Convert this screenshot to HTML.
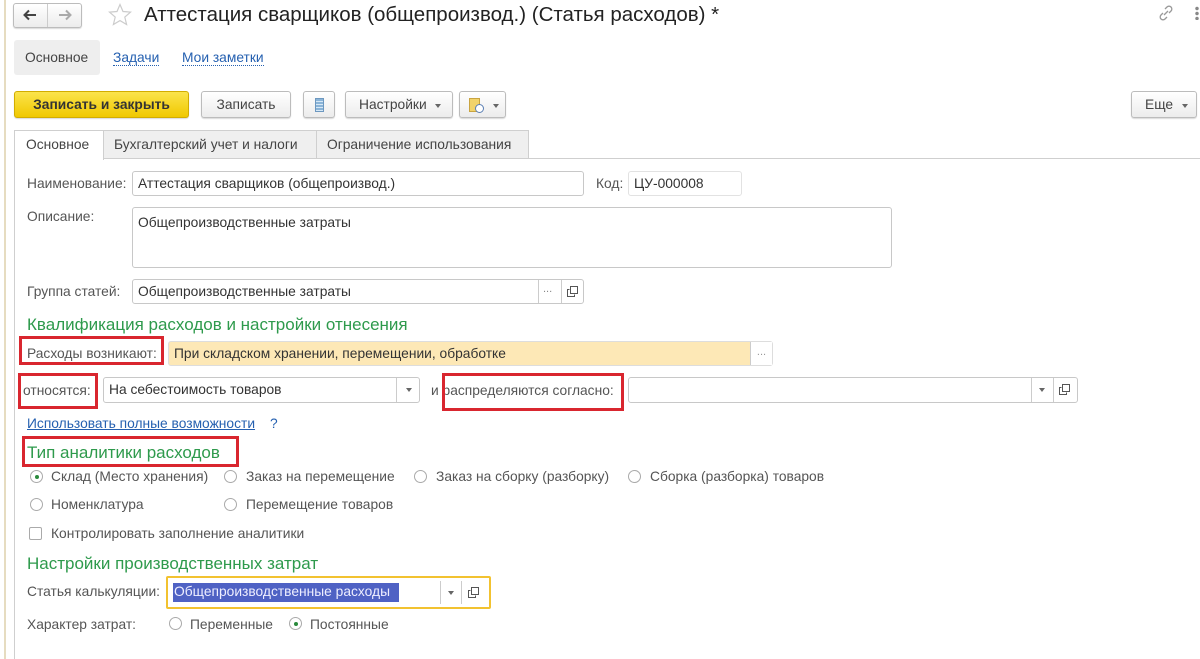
<!DOCTYPE html>
<html><head><meta charset="utf-8"><style>
*{box-sizing:border-box;margin:0;padding:0}
body{width:1200px;height:659px;background:#fff;font-family:"Liberation Sans","Noto Sans CJK SC",sans-serif;font-size:13.8px;color:#333;position:relative;overflow:hidden}
.a{position:absolute;white-space:nowrap}
.btn{position:absolute;border:1px solid #bcbcbc;border-radius:3px;background:linear-gradient(#fff,#ececec);box-shadow:0 1px 1px rgba(0,0,0,.15);text-align:center;color:#444}
.inp{position:absolute;border:1px solid #c8c8c8;border-radius:3px;background:#fff;padding-left:5px;color:#333}
.lbl{position:absolute;color:#555;white-space:nowrap}
.h{position:absolute;color:#2e9a4c;font-size:17px;white-space:nowrap}
.red{position:absolute;border:3px solid #d9262f}
.rad{position:absolute;width:13px;height:13px;border:1px solid #aaa;border-radius:50%;background:#fff}
.rad.on::after{content:"";position:absolute;left:3.5px;top:3.5px;width:4px;height:4px;border-radius:50%;background:#2a8a3c}
.sep{position:absolute;top:0;bottom:0;border-left:1px solid #ccc}
.dd{position:absolute;width:0;height:0;border-left:3px solid transparent;border-right:3px solid transparent;border-top:4px solid #666}
.ic{position:absolute;width:11px;height:11px}
</style></head><body>
<svg width="0" height="0" style="position:absolute"><defs><g id="cp"><rect x="3.5" y="0.5" width="7" height="7" fill="#fff" stroke="#555"/><path d="M2.5 3.5H0.5V10.5H7.5V8.5" fill="none" stroke="#555"/></g></defs></svg>
<div class="a" style="left:4px;top:0;width:2px;height:659px;background:#e6dcc0"></div>
<!-- nav -->
<div class="btn" style="left:13px;top:3px;width:69px;height:25px"></div>
<div class="a" style="left:47px;top:4px;width:1px;height:23px;background:#ccc"></div>
<svg class="a" style="left:23px;top:9px" width="14" height="12" viewBox="0 0 14 12"><path d="M13 6H2M6 1.5L1.5 6 6 10.5" fill="none" stroke="#444" stroke-width="2"/></svg>
<svg class="a" style="left:58px;top:9px" width="14" height="12" viewBox="0 0 14 12"><path d="M1 6H12M8 1.5L12.5 6 8 10.5" fill="none" stroke="#aaa" stroke-width="2"/></svg>
<svg class="a" style="left:108px;top:3px" width="24" height="23" viewBox="0 0 24 23"><path d="M12 1.5l3 7 7.5.6-5.7 5 1.8 7.4L12 17.6 5.4 21.5l1.8-7.4-5.7-5 7.5-.6z" fill="none" stroke="#ccc" stroke-width="1.2"/></svg>
<div class="a" style="left:144px;top:3px;font-size:20.5px;color:#222">Аттестация сварщиков (общепроизвод.) (Статья расходов) *</div>
<svg class="a" style="left:1158px;top:5px" width="16" height="16" viewBox="0 0 16 16"><g fill="none" stroke="#999" stroke-width="1.3"><path d="M7 4l2-2a2.5 2.5 0 0 1 4 4l-2 2"/><path d="M9 12l-2 2a2.5 2.5 0 0 1-4-4l2-2"/><path d="M6 10l4-4"/></g></svg>
<div class="a" style="left:1195px;top:6px;width:4px;height:14px;background:radial-gradient(circle,#888 1.5px,transparent 2px) 0 0/4px 5px"></div>
<!-- section tabs -->
<div class="a" style="left:14px;top:40px;width:86px;height:35px;background:#eeeeee;border-radius:3px"></div>
<div class="a" style="left:25px;top:50px;color:#444">Основное</div>
<div class="a" style="left:113px;top:50px;color:#2560b0;border-bottom:1px dotted #2560b0;line-height:15px">Задачи</div>
<div class="a" style="left:182px;top:50px;color:#2560b0;border-bottom:1px dotted #2560b0;line-height:15px">Мои заметки</div>
<!-- toolbar -->
<div class="btn" style="left:14px;top:91px;width:175px;height:27px;background:linear-gradient(#fbe44c,#f0c800);border-color:#d2ad00;line-height:25px;color:#333;font-weight:bold">Записать и закрыть</div>
<div class="btn" style="left:201px;top:91px;width:90px;height:27px;line-height:25px">Записать</div>
<div class="btn" style="left:303px;top:91px;width:32px;height:27px"><div class="a" style="left:11px;top:6px;width:9px;height:14px;background:repeating-linear-gradient(#8ab4d8 0 2px,#d6e8f6 2px 3px);border:1px solid #6d98c0"></div></div>
<div class="btn" style="left:345px;top:91px;width:108px;height:27px;line-height:25px;text-align:left;padding-left:13px">Настройки<div class="dd" style="left:89px;top:12px"></div></div>
<div class="btn" style="left:459px;top:91px;width:47px;height:27px"><div class="a" style="left:9px;top:6px;width:11px;height:14px;background:#f2d36a;border:1px solid #c9a440"></div><div class="a" style="left:15px;top:12px;width:9px;height:9px;border-radius:50%;background:#fff;border:1.5px solid #5b7fb4"></div><div class="dd" style="left:33px;top:12px"></div></div>
<div class="btn" style="left:1131px;top:91px;width:66px;height:27px;line-height:25px;text-align:left;padding-left:13px">Еще<div class="dd" style="left:50px;top:12px"></div></div>
<!-- tabs -->
<div class="a" style="left:14px;top:158px;width:1186px;height:1px;background:#cfcfcf"></div>
<div class="a" style="left:14px;top:158px;width:1px;height:501px;background:#cfcfcf"></div>
<div class="a" style="left:103px;top:130px;width:214px;height:29px;background:#efefef;border:1px solid #cfcfcf"></div>
<div class="a" style="left:316px;top:130px;width:213px;height:29px;background:#efefef;border:1px solid #cfcfcf"></div>
<div class="a" style="left:14px;top:130px;width:90px;height:30px;background:#fff;border:1px solid #cfcfcf;border-bottom:none"></div>
<div class="a" style="left:26px;top:137px;color:#444">Основное</div>
<div class="a" style="left:114px;top:137px;color:#444">Бухгалтерский учет и налоги</div>
<div class="a" style="left:327px;top:137px;color:#444">Ограничение использования</div>
<!-- fields -->
<div class="lbl" style="left:27px;top:176px">Наименование:</div>
<div class="inp" style="left:132px;top:171px;width:452px;height:25px;line-height:23px">Аттестация сварщиков (общепроизвод.)</div>
<div class="lbl" style="left:596px;top:176px">Код:</div>
<div class="inp" style="left:628px;top:171px;width:114px;height:25px;line-height:23px;border-color:#e2e2e2">ЦУ-000008</div>
<div class="lbl" style="left:27px;top:209px">Описание:</div>
<div class="inp" style="left:132px;top:207px;width:760px;height:61px;padding-top:7px">Общепроизводственные затраты</div>
<div class="lbl" style="left:27px;top:284px">Группа статей:</div>
<div class="inp" style="left:132px;top:279px;width:452px;height:25px;line-height:23px">Общепроизводственные затраты<div class="sep" style="left:405px"></div><div class="sep" style="left:428px"></div><div class="a" style="left:410px;top:-2px;color:#888;font-size:11px">...</div><svg class="ic" style="left:434px;top:6px"><use href="#cp"/></svg></div>
<div class="h" style="left:27px;top:315px">Квалификация расходов и настройки отнесения</div>
<div class="lbl" style="left:27px;top:346px">Расходы возникают:</div>
<div class="inp" style="left:168px;top:341px;width:605px;height:25px;line-height:23px;background:#fde8b6;border-color:#ddd">При складском хранении, перемещении, обработке<div class="a" style="left:581px;top:0;width:22px;height:23px;background:#fff;border-left:1px solid #ccc;color:#999;font-size:11px;text-align:center;line-height:20px">...</div></div>
<div class="red" style="left:19px;top:336px;width:145px;height:29px"></div>
<div class="lbl" style="left:23px;top:383px">относятся:</div>
<div class="inp" style="left:103px;top:377px;width:317px;height:26px;line-height:24px">На себестоимость товаров<div class="sep" style="left:292px"></div><div class="dd" style="left:302px;top:10px"></div></div>
<div class="red" style="left:18px;top:373px;width:80px;height:36px"></div>
<div class="lbl" style="left:431px;top:383px">и распределяются согласно:</div>
<div class="red" style="left:442px;top:373px;width:182px;height:38px"></div>
<div class="inp" style="left:628px;top:377px;width:450px;height:26px"><div class="sep" style="left:402px"></div><div class="sep" style="left:424px"></div><div class="dd" style="left:410px;top:10px"></div><svg class="ic" style="left:430px;top:6px"><use href="#cp"/></svg></div>
<div class="a" style="left:27px;top:416px;color:#2560b0;text-decoration:underline">Использовать полные возможности</div>
<div class="a" style="left:270px;top:416px;color:#2560b0">?</div>
<div class="h" style="left:27px;top:443px">Тип аналитики расходов</div>
<div class="red" style="left:22px;top:436px;width:217px;height:31px"></div>
<div class="rad on" style="left:30px;top:470px"></div><div class="lbl" style="left:51px;top:469px">Склад (Место хранения)</div>
<div class="rad" style="left:224px;top:470px"></div><div class="lbl" style="left:246px;top:469px">Заказ на перемещение</div>
<div class="rad" style="left:414px;top:470px"></div><div class="lbl" style="left:436px;top:469px">Заказ на сборку (разборку)</div>
<div class="rad" style="left:628px;top:470px"></div><div class="lbl" style="left:650px;top:469px">Сборка (разборка) товаров</div>
<div class="rad" style="left:30px;top:498px"></div><div class="lbl" style="left:51px;top:497px">Номенклатура</div>
<div class="rad" style="left:224px;top:498px"></div><div class="lbl" style="left:246px;top:497px">Перемещение товаров</div>
<div class="a" style="left:29px;top:527px;width:13px;height:13px;border:1px solid #aaa;border-radius:2px"></div><div class="lbl" style="left:51px;top:526px">Контролировать заполнение аналитики</div>
<div class="h" style="left:27px;top:554px">Настройки производственных затрат</div>
<div class="lbl" style="left:27px;top:584px">Статья калькуляции:</div>
<div class="a" style="left:166px;top:576px;width:325px;height:33px;border:2px solid #f2c230;border-radius:2px;background:#fff">
 <div class="a" style="left:5px;top:5px;width:226px;height:19px;background:#4f62c4"></div>
 <div class="a" style="left:6px;top:6px;color:#eef">Общепроизводственные расходы</div>
 <div class="sep" style="left:272px;top:3px;bottom:3px"></div><div class="sep" style="left:293px;top:3px;bottom:3px"></div>
 <div class="dd" style="left:280px;top:13px"></div><svg class="ic" style="left:300px;top:9px"><use href="#cp"/></svg>
</div>
<div class="lbl" style="left:27px;top:617px">Характер затрат:</div>
<div class="rad" style="left:169px;top:617px"></div><div class="lbl" style="left:190px;top:617px">Переменные</div>
<div class="rad on" style="left:289px;top:617px"></div><div class="lbl" style="left:310px;top:617px">Постоянные</div>
</body></html>
